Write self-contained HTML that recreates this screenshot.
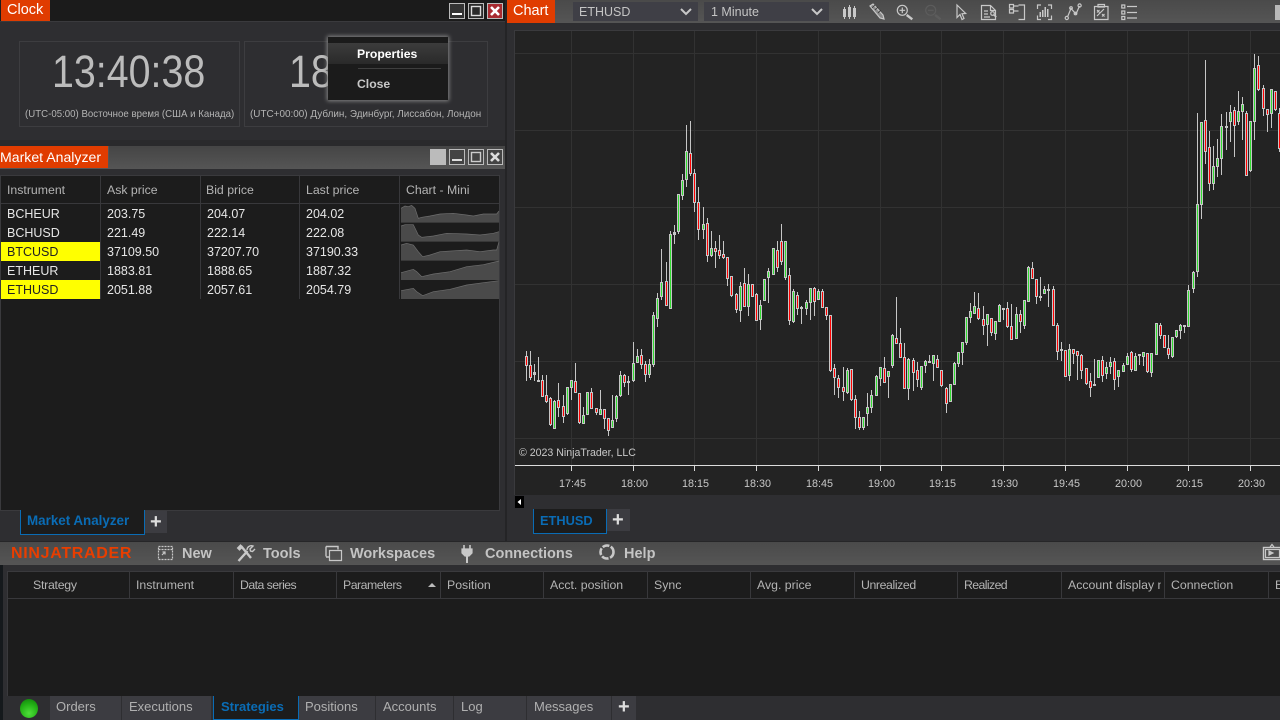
<!DOCTYPE html>
<html><head><meta charset="utf-8"><style>
html,body{margin:0;padding:0;width:1280px;height:720px;overflow:hidden;background:#2e2e31}
body{position:relative;font-family:"Liberation Sans","Noto Sans CJK SC",sans-serif;}
.b{position:absolute;box-sizing:border-box}
.t{position:absolute;white-space:nowrap;line-height:20px;height:20px}
.r{font-size:12.5px;color:#e6e6e6}
.h{font-size:12.3px;color:#b4b4b4}
.h2{font-size:12.3px;color:#b4b4b4}
.m{font-size:14.5px;font-weight:bold;color:#c4c4c4}
.s{font-size:13px;color:#b0b0b0}
.tab{position:absolute;top:696px;height:24px;background:#3c3c41;box-sizing:border-box;border-right:1px solid #2e2e31}
.ax{font-size:10.8px;color:#c8c8c8}
.or{position:absolute;background:#e03c00;color:#fff;font-size:14.5px;line-height:21px;height:21px;white-space:nowrap}
svg{position:absolute;overflow:visible}
</style></head><body>

<!-- Clock window -->
<div class="b" style="left:0;top:0;width:505px;height:22px;background:#1b1b1b;border-bottom:1px solid #3a3a3d"></div>
<div class="or" style="left:1px;top:0;width:49px;padding-left:6px;box-sizing:border-box">Clock</div>
<div class="b" style="left:19px;top:41px;width:221px;height:86px;border:1px solid #3d3d40"></div>
<div class="b" style="left:244px;top:41px;width:244px;height:86px;border:1px solid #3d3d40"></div>
<div class="t" style="left:52px;top:46px;font-size:45px;line-height:52px;height:52px;color:#bcbcbc;transform:scaleX(.875);transform-origin:0 0">13:40:38</div>
<div class="t" style="left:289px;top:46px;font-size:45px;line-height:52px;height:52px;color:#bcbcbc;transform:scaleX(.875);transform-origin:0 0">18</div>
<div class="t" style="left:25px;top:105px;font-size:10.2px;color:#b4b4b4;letter-spacing:.02px;transform:scaleX(.946);transform-origin:0 0">(UTC-05:00) Восточное время (США и Канада)</div>
<div class="t" style="left:250px;top:105px;font-size:10.2px;color:#b4b4b4;letter-spacing:.02px;transform:scaleX(.97);transform-origin:0 0">(UTC+00:00) Дублин, Эдинбург, Лиссабон, Лондон</div>

<!-- Context menu -->
<div class="b" style="left:328px;top:37px;width:120px;height:63px;background:#1b1b1b;box-shadow:0 0 4px 1px #888"></div>
<div class="b" style="left:328px;top:43px;width:120px;height:21px;background:linear-gradient(#3c3c3c,#2a2a2a)"></div>
<div class="t" style="left:357px;top:44px;font-size:12.2px;font-weight:bold;color:#fff">Properties</div>
<div class="b" style="left:358px;top:68px;width:83px;height:1px;background:#3f3f3f"></div>
<div class="t" style="left:357px;top:74px;font-size:12.2px;font-weight:bold;color:#c8c8c8">Close</div>

<!-- Market analyzer -->
<div class="b" style="left:0;top:140px;width:505px;height:6px;background:#2a2a2c"></div>
<div class="b" style="left:0;top:146px;width:505px;height:23px;background:linear-gradient(#454545,#555)"></div>
<div class="or" style="left:0;top:146px;width:108px;height:22px;line-height:22px;box-shadow:1px 0 0 #555;font-size:14.1px">Market Analyzer</div>
<div class="b" style="left:0;top:175px;width:500px;height:336px;background:#1c1c1c;border:1px solid #3a3a3d"></div>
<div class="b" style="left:1px;top:203px;width:498px;height:1px;background:#38383b"></div>
<div class="b" style="left:100px;top:176px;width:1px;height:123px;background:#38383b"></div>
<div class="b" style="left:200px;top:176px;width:1px;height:123px;background:#38383b"></div>
<div class="b" style="left:299px;top:176px;width:1px;height:123px;background:#38383b"></div>
<div class="b" style="left:399px;top:176px;width:1px;height:123px;background:#38383b"></div>
<div class="t h" style="left:7px;top:180px">Instrument</div>
<div class="t h" style="left:107px;top:180px">Ask price</div>
<div class="t h" style="left:206px;top:180px">Bid price</div>
<div class="t h" style="left:306px;top:180px">Last price</div>
<div class="t h" style="left:406px;top:180px">Chart - Mini</div>
<div class="b" style="left:1px;top:242px;width:99px;height:19px;background:#ffff00"></div>
<div class="b" style="left:1px;top:280px;width:99px;height:19px;background:#ffff00"></div>
<div class="t r" style="left:7px;top:204px">BCHEUR</div><div class="t r" style="left:107px;top:204px">203.75</div><div class="t r" style="left:207px;top:204px">204.07</div><div class="t r" style="left:306px;top:204px">204.02</div>
<div class="t r" style="left:7px;top:223px">BCHUSD</div><div class="t r" style="left:107px;top:223px">221.49</div><div class="t r" style="left:207px;top:223px">222.14</div><div class="t r" style="left:306px;top:223px">222.08</div>
<div class="t r" style="left:7px;top:242px;color:#222">BTCUSD</div><div class="t r" style="left:107px;top:242px">37109.50</div><div class="t r" style="left:207px;top:242px">37207.70</div><div class="t r" style="left:306px;top:242px">37190.33</div>
<div class="t r" style="left:7px;top:261px">ETHEUR</div><div class="t r" style="left:107px;top:261px">1883.81</div><div class="t r" style="left:207px;top:261px">1888.65</div><div class="t r" style="left:306px;top:261px">1887.32</div>
<div class="t r" style="left:7px;top:280px;color:#222">ETHUSD</div><div class="t r" style="left:107px;top:280px">2051.88</div><div class="t r" style="left:207px;top:280px">2057.61</div><div class="t r" style="left:306px;top:280px">2054.79</div>

<svg style="left:0;top:0" width="510" height="310">
<g transform="translate(0 140) scale(.33333)" fill="#4a4a4a" stroke="none">
<path d="M1203 248V205L1215 198 1225 200 1235 196 1245 205 1255 235 1265 232 1290 228 1320 222 1360 220 1400 225 1420 228 1450 222 1490 222 1497 213V248Z"/>
<path d="M1203 305V258L1215 254 1240 254 1255 285 1265 292 1300 288 1340 280 1400 282 1440 285 1480 280 1497 275V305Z"/>
<path d="M1203 362V315L1220 310 1240 315 1255 335 1268 350 1290 345 1320 335 1400 330 1440 335 1480 330 1490 330 1497 305V362Z"/>
<path d="M1203 420V398L1240 388 1250 395 1265 410 1300 402 1350 395 1400 380 1450 374 1497 363V420Z"/>
<path d="M1203 477V452L1240 445 1250 455 1268 467 1300 455 1350 448 1400 435 1450 428 1497 422V477Z"/>
</g>
<g transform="translate(0 140) scale(.33333)" fill="none" stroke="#6e6e6e" stroke-width="2">
<path d="M1203 205L1215 198 1225 200 1235 196 1245 205 1255 235 1265 232 1290 228 1320 222 1360 220 1400 225 1420 228 1450 222 1490 222 1497 213"/>
<path d="M1203 258L1215 254 1240 254 1255 285 1265 292 1300 288 1340 280 1400 282 1440 285 1480 280 1497 275"/>
<path d="M1203 315L1220 310 1240 315 1255 335 1268 350 1290 345 1320 335 1400 330 1440 335 1480 330 1490 330 1497 305"/>
<path d="M1203 398L1240 388 1250 395 1265 410 1300 402 1350 395 1400 380 1450 374 1497 363"/>
<path d="M1203 452L1240 445 1250 455 1268 467 1300 455 1350 448 1400 435 1450 428 1497 422"/>
</g>
<!-- Clock window buttons -->
<g fill="none" stroke="#bbb">
<rect x="449.5" y="3.5" width="15" height="15" fill="#333"/><rect x="452" y="13" width="10" height="2" fill="#fff" stroke="none"/>
<rect x="468.5" y="3.5" width="15" height="15" fill="#2a2a2a"/><rect x="471.5" y="6.5" width="9" height="9" stroke="#ddd" stroke-width="1.4"/>
<rect x="487.5" y="3.5" width="15" height="15" fill="#a82a30"/><path d="M491 7l8 8M499 7l-8 8" stroke="#fff" stroke-width="2.6"/>
</g>
<!-- Market buttons -->
<g fill="none" stroke="#bbb">
<rect x="430" y="149" width="16" height="16" fill="#bbb" stroke="none"/>
<rect x="449.5" y="149.5" width="15" height="15" fill="#444"/><rect x="452" y="159" width="10" height="2" fill="#ddd" stroke="none"/>
<rect x="468.5" y="149.5" width="15" height="15" fill="#444"/><rect x="471.5" y="152.5" width="9" height="9" stroke="#ccc" stroke-width="1.4"/>
<rect x="487.5" y="149.5" width="15" height="15" fill="#444"/><path d="M491 153l8 8M499 153l-8 8" stroke="#ddd" stroke-width="2.6"/>
</g>
</svg>

<!-- Left tabs -->
<div class="b" style="left:20px;top:510px;width:125px;height:25px;background:#1c1c1c;border:1px solid #0a6cb5;border-top:none"></div>
<div class="t" style="left:27px;top:511px;font-size:13.4px;font-weight:bold;color:#0a6cb5">Market Analyzer</div>
<div class="b" style="left:145px;top:511px;width:22px;height:22px;background:#3c3c41"></div>
<div class="t" style="left:150px;top:511px;font-size:20px;line-height:22px;color:#ddd;font-weight:bold">+</div>

<!-- Chart window -->
<div class="b" style="left:505px;top:0;width:2px;height:541px;background:#242426"></div>
<div class="b" style="left:507px;top:0;width:773px;height:23px;background:linear-gradient(#4a4a4a,#555)"></div>
<div class="or" style="left:507px;top:0;width:48px;height:23px;line-height:23px;padding-left:6px;box-sizing:border-box">Chart</div>
<div class="b" style="left:573px;top:2px;width:125px;height:19px;background:#3f3f46"></div>
<div class="t" style="left:579px;top:2px;font-size:12.5px;color:#c4c4c4">ETHUSD</div>
<div class="b" style="left:704px;top:2px;width:125px;height:19px;background:#3f3f46"></div>
<div class="t" style="left:711px;top:2px;font-size:12.5px;color:#c4c4c4">1 Minute</div>
<div class="b" style="left:514px;top:30px;width:766px;height:465px;background:#232323;border-top:1px solid #3a3a3d;border-left:1px solid #3a3a3d"></div>

<svg id="c" style="left:0;top:0" width="1280" height="720" shape-rendering="crispEdges"></svg>

<div class="t" style="left:519px;top:443px;font-size:10.6px;color:#c8c8c8">© 2023 NinjaTrader, LLC</div>
<div class="t ax" style="left:559px;top:474px">17:45</div>
<div class="t ax" style="left:621px;top:474px">18:00</div>
<div class="t ax" style="left:682px;top:474px">18:15</div>
<div class="t ax" style="left:744px;top:474px">18:30</div>
<div class="t ax" style="left:806px;top:474px">18:45</div>
<div class="t ax" style="left:868px;top:474px">19:00</div>
<div class="t ax" style="left:929px;top:474px">19:15</div>
<div class="t ax" style="left:991px;top:474px">19:30</div>
<div class="t ax" style="left:1053px;top:474px">19:45</div>
<div class="t ax" style="left:1115px;top:474px">20:00</div>
<div class="t ax" style="left:1176px;top:474px">20:15</div>
<div class="t ax" style="left:1238px;top:474px">20:30</div>

<div class="b" style="left:514px;top:495px;width:766px;height:14px;background:#2e2e31"></div>
<div class="b" style="left:515px;top:496px;width:9px;height:12px;background:#000"></div>
<svg style="left:515px;top:496px" width="9" height="12"><path d="M6 3v6L2.5 6Z" fill="#fff"/></svg>
<div class="b" style="left:533px;top:509px;width:74px;height:25px;background:#1c1c1c;border:1px solid #0a6cb5;border-top:none"></div>
<div class="t" style="left:540px;top:511px;font-size:12.8px;font-weight:bold;color:#0a6cb5">ETHUSD</div>
<div class="b" style="left:607px;top:509px;width:23px;height:22px;background:#3c3c41"></div>
<div class="t" style="left:612px;top:509px;font-size:20px;line-height:22px;color:#ddd;font-weight:bold">+</div>

<!-- Toolbar icons -->
<svg style="left:0;top:0" width="1280" height="30" fill="none" stroke="#c8c8c8" stroke-width="1.2">
<path d="M681 9l5 5 5-5M812 9l5 5 5-5" stroke-width="2"/>
<g stroke="none" fill="#c8c8c8"><rect x="843" y="9" width="3" height="8"/><rect x="844" y="7" width="1" height="12"/><rect x="848" y="7" width="3" height="10"/><rect x="849" y="5" width="1" height="14"/><rect x="853" y="8" width="3" height="9"/><rect x="854" y="6" width="1" height="13"/></g>
<path d="M870 6l3-2 10 11 1 4-4-1Z" fill="#888"/><path d="M872 8l3-3M875 10l3-3M878 13l3-3" stroke="#333" stroke-width=".8"/>
<circle cx="902.3" cy="10.3" r="5"/><path d="M899.5 10.3h5.6M902.3 7.5v5.6"/><path d="M906.7 15l5.6 4.3" stroke-width="2.4"/>
<g stroke="#5c5c5c"><circle cx="930.7" cy="10.3" r="5"/><path d="M928 10.3h5.6"/><path d="M935 15l5.6 4.3" stroke-width="2.4"/></g>
<path d="M957 5v12.5l3-3 2 5 2-1-2-4.7 3.7-.3Z"/>
<path d="M981.5 19.5V5.5h9l5 5v9ZM990.5 5.5v5h5M984 11h4M984 14h4M984 17h6"/><circle cx="992.5" cy="13.5" r="1.8"/><path d="M994 15l2.3 2" stroke-width="1.6"/>
<path d="M1018.5 5h6v14.5h-6M1009.5 4.5h4v3.5h-4ZM1009.5 9.5h4v3.5h-4ZM1013.5 6h5M1013.5 11h5"/>
<path d="M1041 5h-3.5v4M1048 5h3.5v4M1041 19.5h-3.5v-4M1048 19.5h3.5v-4"/>
<g stroke="none" fill="#c8c8c8"><rect x="1039.5" y="12" width="1.5" height="5"/><rect x="1042" y="10" width="1.5" height="7"/><rect x="1044.5" y="7" width="1.5" height="10"/><rect x="1047" y="9" width="1.5" height="8"/></g>
<path d="M1067.5 17l3.5-8.5 5 5.5 3.5-8"/><circle cx="1066.8" cy="18" r="1.6"/><circle cx="1071" cy="8" r="1.3"/><circle cx="1075.5" cy="13.5" r="1.3"/><circle cx="1079.6" cy="5.5" r="1.6"/>
<path d="M1094.5 6.5h13.5v13h-13.5ZM1098 4.5h6.5v2.5h-6.5ZM1097 16l7-7M1097 10l2.5 2.5M1099.5 10l-2.5 2.5M1102 14l2.5 2.5M1104.5 14l-2.5 2.5"/>
<path d="M1121.8 5h3v3h-3ZM1121.8 11h3v3h-3ZM1121.8 16.500h3v3h-3ZM1127 6.500h10M1127 12.500h10M1127 18h10"/>
</svg>
<div class="b" style="left:1275px;top:5px;width:5px;height:15px;background:#b8b8b8"></div>

<!-- Control center -->
<div class="b" style="left:0;top:541px;width:1280px;height:179px;background:#2e2e31;border-top:1px solid #262628"></div>
<div class="b" style="left:0;top:542px;width:1280px;height:23px;background:linear-gradient(#4a4a4a,#555)"></div>
<div class="b" style="left:0;top:565px;width:3px;height:155px;background:#15191c"></div>
<div class="t" style="left:11px;top:544px;font-size:16px;font-weight:bold;color:#e83e00;letter-spacing:.7px">NINJATRADER</div>
<div class="t m" style="left:182px;top:544px">New</div>
<div class="t m" style="left:263px;top:544px">Tools</div>
<div class="t m" style="left:350px;top:544px">Workspaces</div>
<div class="t m" style="left:485px;top:544px">Connections</div>
<div class="t m" style="left:624px;top:544px">Help</div>
<svg style="left:0;top:541px" width="1280" height="24" fill="none" stroke="#c8c8c8" stroke-width="1.2">
<path d="M158.500 5.500h14v13h-14ZM158.500 8.500h14" stroke-dasharray="2 1"/><path d="M162 14l3-3M162.500 11h2.500v2.500"/>
<path d="M238.500 20l9-10M241 5l10 12" stroke-width="2.400"/><path d="M247 9c0-3 3-5 6-4l-3 3 .5 2 2 .5 2.500-2.500" stroke-width="1.400"/><path d="M237.500 7l3-3 2 2-3 3Z" fill="#c8c8c8"/>
<path d="M329.500 9.500h12v10h-12Z"/><path d="M326 16h3M326 5.500h12v3M326 5.500v10" stroke-width="1.400"/>
<path d="M464 4v4M470 4v4" stroke-width="1.600"/><path d="M462 8h10v4l-3 3h-4l-3-3Z" fill="#c8c8c8"/><path d="M467 15v7" stroke-width="2"/>
<circle cx="607" cy="11" r="6.500" stroke-width="2.600" stroke-dasharray="7 1.600"/>
<rect x="1263.500" y="6.500" width="20" height="12" stroke-width="1.400"/><rect x="1265.500" y="8.500" width="14" height="8"/><path d="M1269 10v4l4-2Z" fill="#c8c8c8"/><path d="M1270 6l2-2.500 2 2.500"/>
</svg>

<div class="b" style="left:7px;top:571px;width:1273px;height:125px;background:#1c1c1c;border-top:1px solid #3a3a3d;border-left:1px solid #3a3a3d"></div>
<div class="b" style="left:8px;top:598px;width:1272px;height:1px;background:#38383b"></div>
<svg style="left:0;top:571px" width="1280" height="28" shape-rendering="crispEdges"><g fill="#38383b">
<rect x="129" width="1" height="27"/><rect x="233" width="1" height="27"/><rect x="336" width="1" height="27"/><rect x="440" width="1" height="27"/><rect x="543" width="1" height="27"/><rect x="647" width="1" height="27"/><rect x="750" width="1" height="27"/><rect x="854" width="1" height="27"/><rect x="957" width="1" height="27"/><rect x="1061" width="1" height="27"/><rect x="1164" width="1" height="27"/><rect x="1268" width="1" height="27"/>
</g><path d="M428 16h8l-4-4Z" fill="#bbb" shape-rendering="auto"/></svg>
<div class="t h2" style="left:33px;top:575px;letter-spacing:-.25px">Strategy</div>
<div class="t h2" style="left:136px;top:575px">Instrument</div>
<div class="t h2" style="left:240px;top:575px;letter-spacing:-.55px">Data series</div>
<div class="t h2" style="left:343px;top:575px;letter-spacing:-.5px">Parameters</div>
<div class="t h2" style="left:447px;top:575px">Position</div>
<div class="t h2" style="left:550px;top:575px">Acct. position</div>
<div class="t h2" style="left:654px;top:575px">Sync</div>
<div class="t h2" style="left:757px;top:575px">Avg. price</div>
<div class="t h2" style="left:861px;top:575px;letter-spacing:-.4px">Unrealized</div>
<div class="t h2" style="left:964px;top:575px;letter-spacing:-.6px">Realized</div>
<div class="t h2" style="left:1068px;top:575px;width:93px;overflow:hidden">Account display name</div>
<div class="t h2" style="left:1171px;top:575px">Connection</div>
<div class="t h2" style="left:1275px;top:575px;width:5px;overflow:hidden">Estimated</div>

<!-- Bottom tabs -->
<div class="b" style="left:20px;top:699px;width:18px;height:19px;border-radius:50%;background:radial-gradient(circle at 50% 75%,#4fe03a 0,#22b015 55%,#0f7a0a 100%)"></div>
<div class="tab" style="left:50px;width:72px"></div>
<div class="tab" style="left:122px;width:90px"></div>
<div class="b" style="left:213px;top:696px;width:86px;height:24px;background:#1c1c1c;border:1px solid #0a6cb5;border-top:none"></div>
<div class="tab" style="left:299px;width:77px"></div>
<div class="tab" style="left:376px;width:78px"></div>
<div class="tab" style="left:454px;width:73px"></div>
<div class="tab" style="left:527px;width:85px"></div>
<div class="tab" style="left:612px;width:24px;border:none"></div>
<div class="t s" style="left:56px;top:697px">Orders</div>
<div class="t s" style="left:129px;top:697px">Executions</div>
<div class="t s" style="left:221px;top:697px;font-weight:bold;color:#0a6cb5">Strategies</div>
<div class="t s" style="left:305px;top:697px">Positions</div>
<div class="t s" style="left:383px;top:697px">Accounts</div>
<div class="t s" style="left:461px;top:697px">Log</div>
<div class="t s" style="left:534px;top:697px">Messages</div>
<div class="t" style="left:618px;top:697px;font-size:20px;line-height:20px;color:#ddd;font-weight:bold">+</div>

<script>
var parts=[],G="#c6c6c6",GR="#323232";
function R(x,y,w,h,f){parts.push('<rect x="'+x+'" y="'+y+'" width="'+w+'" height="'+h+'" fill="'+f+'"/>');}
[53,130,207,284,361,438].forEach(function(y){R(515,y,765,1,GR);});
var vx=[571,633,694,756,818,880,941,1003,1065,1127,1188,1250];
vx.forEach(function(x){R(x,31,1,434,GR);R(x,466,1,5,"#d8d8d8");});
R(515,465,765,1,"#dcdcdc");
var blocks=[
[515,290,"34,183,272,198,228,r;46,183,270,226,263,r;58,222,272,246,254,g;70,201,272,270,273,g;82,255,322,270,320,r;94,255,338,316,335,r;106,322,408,324,406,r;118,330,416,332,416,g;130,279,380,331,353,r;145,315,398,349,380,r;157,290,375,292,372,g;169,270,330,271,293,g;181,219,310,274,310,r;193,310,402,310,400,r;205,350,402,376,402,g;217,305,376,307,374,g;229,295,358,307,356,r;244,354,374,355,368,r;256,300,376,358,374,g;268,358,418,358,386,r;280,385,437,385,422,r;292,315,414,391,414,g;304,316,395,318,387,g;316,243,320,255,318,g;328,252,292,254,280,r;340,258,315,273,278,g;355,156,275,220,272,g;367,178,220,198,218,g;379,178,236,196,226,r;391,213,275,223,254,r;403,208,263,223,254,g;415,67,230,75,224,g;427,10,110,25,86,g"],
[515,100,"439,447,600,547,592,g;454,487,617,544,617,r;466,394,626,403,626,g;478,376,432,397,404,g;490,283,402,283,396,g;502,222,300,240,288,g;514,75,260,153,240,g;526,63,228,159,222,r;538,208,336,220,308,r;550,261,420,306,390,r;565,321,417,372,390,g;577,354,486,369,468,r;589,393,470,444,468,g;601,423,504,444,456,r;613,405,477,450,468,r;625,423,477,462,474,r;637,471,558,471,537,r;649,528,590,528,587,r;664,579,640,582,630,r;676,546,666,558,632,g;688,504,620,549,620,r;700,522,648,552,620,g;712,552,592,552,590,r;724,579,664,582,664,r;736,600,690,615,660,g;748,538,602,538,602,g;760,504,608,514,533,g;775,445,525,445,525,g"],
[770,280,"22,-117,-24,-90,-36,r;34,-168,-45,-117,-54,r;46,-117,0,-117,-6,g;58,-36,135,-15,122,r;70,27,128,33,126,g;82,36,105,45,87,r;94,78,132,80,85,g;109,60,105,66,87,g;121,24,120,25,68,g;133,21,108,25,66,r;145,27,60,33,60,g;157,27,84,33,84,r;169,81,120,81,108,r;181,105,275,105,272,r;193,252,345,264,293,r;205,285,354,294,324,r;220,261,363,321,336,r;232,264,342,270,339,g;244,267,363,267,360,r;256,345,447,357,414,r;268,393,450,411,444,r;280,411,450,411,444,g;292,339,438,381,402,g;304,330,399,345,384,g;319,285,348,288,348,g;331,261,318,261,297,g;343,231,309,264,309,r;355,273,354,273,291,g;367,162,264,165,258,g;379,51,192,174,192,r;391,144,234,189,234,r;403,189,327,231,327,r;415,234,360,237,327,g;430,234,333,240,279,r;442,246,321,270,300,r;454,258,330,258,324,g;466,240,279,243,258,g;478,225,249,243,248,g;490,225,303,225,252,g;502,225,264,237,264,r;514,270,321,270,318,r;529,321,399,324,372,r;541,312,366,312,366,g;553,246,315,249,315,g;565,216,261,216,252,g;577,186,255,186,219,g;589,111,195,111,189,g;601,69,129,93,114,g;613,36,102,78,102,g;625,39,120,84,117,r;640,78,165,117,138,r;652,102,198,102,135,g;664,114,168,114,159,r;676,123,180,123,162,g;688,72,126,75,126,g;700,84,120,84,87,g;712,66,144,84,141,r;724,72,180,138,180,r;739,81,177,102,177,g;751,90,159,102,126,r;763,60,147,60,138,g"],
[1020,240,"25,78,186,81,186,g;37,66,117,85,117,r;49,117,192,117,170,r;61,111,183,168,174,g;73,138,163,148,163,g;85,132,201,146,150,g;100,138,258,148,258,r;112,249,360,255,336,r;124,306,363,328,332,g;136,330,411,330,411,r;148,312,423,327,408,g;160,327,372,327,342,r;172,333,420,333,348,r;184,342,417,345,393,r;199,384,435,384,432,r;211,399,471,423,444,r;223,357,438,432,438,g;235,360,414,360,414,g;247,348,426,360,408,r;259,366,417,381,402,g;271,351,402,366,381,g;283,354,450,363,420,r;295,390,441,390,411,g;310,369,396,375,396,g;322,339,375,348,375,g;334,333,396,336,390,r;346,339,393,348,393,g;358,342,375,342,348,g;370,336,378,336,351,g;382,339,399,339,396,r;394,339,411,339,399,g;409,249,345,249,345,g;421,249,297,255,288,r;433,285,324,285,324,r;445,285,357,324,345,r;457,291,354,291,351,g;469,270,294,270,291,g;481,252,297,255,273,g;493,255,279,255,261,g;505,135,261,150,261,g;520,93,159,96,147,g"],
[1020,40,"532,219,711,492,696,g;544,247,537,247,495,g;556,60,372,240,336,r;568,273,453,321,432,r;580,318,450,378,432,g;592,297,411,354,381,g;604,222,405,258,357,g;619,216,330,258,264,g;631,195,306,216,246,g;643,201,351,210,258,r;655,153,255,213,246,g;667,171,300,192,216,g;679,213,408,219,408,r;691,243,396,243,393,g;703,42,300,84,246,g;715,48,153,75,150,r;730,135,228,144,207,r;742,207,276,207,225,r;754,147,264,147,222,g;766,153,213,153,210,r;778,204,336,219,327,r"]
];
blocks.forEach(function(b){
 b[2].split(";").forEach(function(s){
  var a=s.split(","),x=Math.floor(b[0]+(+a[0])/3),
  wt=Math.round(b[1]+(+a[1])/3),wb=Math.round(b[1]+(+a[2])/3),
  bt=Math.round(b[1]+(+a[3])/3),bb=Math.round(b[1]+(+a[4])/3),c=a[5]=="r"?"#ff0000":"#32dc32";
  R(x,wt,1,Math.max(1,wb-wt),G);
  var h=Math.max(2,bb-bt);
  R(x-1,bt,3,h,G);
  if(h>3)R(x,bt+1,1,h-2,c);
 });
});
document.getElementById("c").innerHTML=parts.join("");
</script>
</body></html>
